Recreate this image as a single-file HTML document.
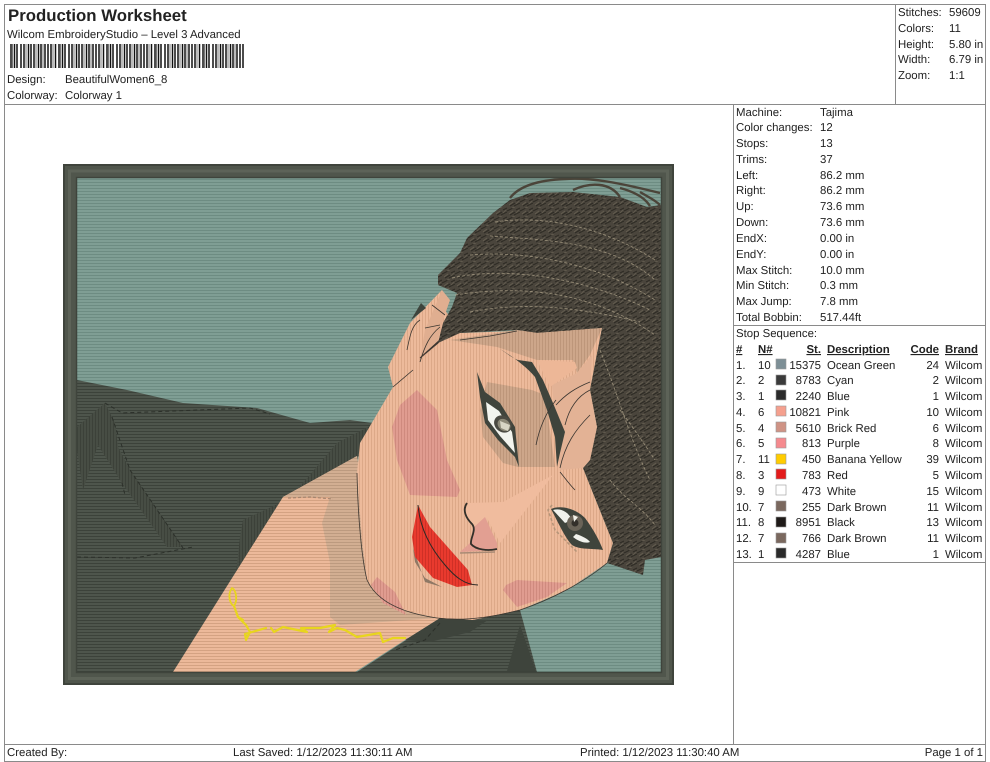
<!DOCTYPE html>
<html><head><meta charset="utf-8"><title>Production Worksheet</title>
<style>
html,body{margin:0;padding:0;background:#fff;width:990px;height:762px;overflow:hidden}
svg{display:block}
text{font-family:"Liberation Sans",Arial,sans-serif;font-size:11.4px;fill:#222;text-rendering:geometricPrecision}
.b{font-weight:bold}
.u{font-weight:bold;text-decoration:underline}
.r{text-anchor:end}
</style></head><body>
<svg width="990" height="762" viewBox="0 0 990 762" xmlns="http://www.w3.org/2000/svg">
<defs>
<pattern id="pTeal" width="6" height="3" patternUnits="userSpaceOnUse"><rect width="6" height="3" fill="#7f9e94"/><rect y="2" width="6" height="1" fill="#6d8c82"/></pattern>
<pattern id="pJack" width="6" height="3" patternUnits="userSpaceOnUse"><rect width="6" height="3" fill="#4e554c"/><rect y="2" width="6" height="1" fill="#3c423a"/></pattern>
<pattern id="pJack2" width="3" height="6" patternUnits="userSpaceOnUse"><rect width="3" height="6" fill="#474d44"/><rect x="2" width="1" height="6" fill="#3c4139"/></pattern>
<pattern id="pSkin" width="3" height="6" patternUnits="userSpaceOnUse"><rect width="3" height="6" fill="#edba9b"/><rect x="2" width="1" height="6" fill="#dca888"/></pattern>
<pattern id="pNeck" width="6" height="3" patternUnits="userSpaceOnUse"><rect width="6" height="3" fill="#ecb99a"/><rect y="2" width="6" height="1" fill="#d4a282"/></pattern>
<pattern id="pShade" width="6" height="3" patternUnits="userSpaceOnUse"><rect width="6" height="3" fill="#d2ae92"/><rect y="2" width="6" height="1" fill="#bc9a7f"/></pattern>
<pattern id="pBrow" width="3" height="6" patternUnits="userSpaceOnUse"><rect width="3" height="6" fill="#cda68a"/><rect x="2" width="1" height="6" fill="#bd967a"/></pattern>
<pattern id="pCheek" width="3" height="6" patternUnits="userSpaceOnUse"><rect width="3" height="6" fill="#e09c90"/><rect x="2" width="1" height="6" fill="#cf8a7e"/></pattern>
<pattern id="pRed" width="3" height="6" patternUnits="userSpaceOnUse"><rect width="3" height="6" fill="#e93a2e"/><rect x="2" width="1" height="6" fill="#cf3026"/></pattern>
<pattern id="pHair" width="13" height="9" patternUnits="userSpaceOnUse"><rect width="13" height="9" fill="#4a453c"/><path d="M0 4L6 1M7 8L13 5M3 8L8 5M9 3L13 1" stroke="#2e2b25" stroke-width="1.2"/><path d="M2 7L6 4M9 6L12 3M5 1L8 0" stroke="#645d50" stroke-width=".8"/></pattern>
<pattern id="pCode" width="48" height="24" patternUnits="userSpaceOnUse" x="10" y="44"><rect width="48" height="24" fill="#fff"/><path d="M1 0V24M4.500 0V24M7 0V24M11 0V24M14 0V24M18.500 0V24M21 0V24M24 0V24M28.500 0V24M31 0V24M35 0V24M38 0V24M41 0V24M45.500 0V24" stroke="#111" stroke-width="1.500"/><path d="M2.500 0V24M16 0V24M26 0V24M33 0V24M43 0V24" stroke="#777" stroke-width="1"/></pattern>
</defs>

<!-- page lines -->
<g stroke="#8a8a8a" stroke-width="1" fill="none" shape-rendering="crispEdges">
<path d="M4.500 4.500H985.500V761.500H4.500Z"/>
<path d="M4 104.500H986"/>
<path d="M895.500 4V104"/>
<path d="M733.500 104V744"/>
<path d="M733 325.500H986"/>
<path d="M733 562.500H986"/>
<path d="M4 744.500H986"/>
</g>

<!-- header -->
<text x="8" y="21" class="b" style="font-size:16.8px">Production Worksheet</text>
<text x="7" y="38">Wilcom EmbroideryStudio – Level 3 Advanced</text>
<rect x="10" y="44" width="234" height="24" fill="url(#pCode)"/>
<text x="7" y="83">Design:</text><text x="65" y="83">BeautifulWomen6_8</text>
<text x="7" y="99">Colorway:</text><text x="65" y="99">Colorway 1</text>

<text x="898" y="16">Stitches:</text><text x="949" y="16">59609</text>
<text x="898" y="32">Colors:</text><text x="949" y="32">11</text>
<text x="898" y="48">Height:</text><text x="949" y="48">5.80 in</text>
<text x="898" y="63">Width:</text><text x="949" y="63">6.79 in</text>
<text x="898" y="79">Zoom:</text><text x="949" y="79">1:1</text>

<!-- embroidery -->
<rect x="77" y="178" width="584" height="494" fill="url(#pTeal)"/>
<!-- jacket left -->
<path d="M77 380L127 390L183 403L257 408L310 423L350 420L372 423L357 460L283 497L230 587L173 672H77Z" fill="url(#pJack)"/>
<path d="M357 672L440 618L520 610L537 672Z" fill="url(#pJack)"/>
<path d="M520 625L507 671H536Z" fill="#3e443c"/>
<path d="M405 640L440 618L488 620L470 632L430 642Z" fill="#3e443c"/>
<path d="M77 427L105 403L115 423L118 447L130 470L183 547H167L122 483L98 445L83 490L77 450Z" fill="url(#pJack2)"/>
<path d="M337 443L297 490L357 457L372 425Z" fill="url(#pJack2)"/>
<path d="M243 520L280 503L235 582L240 537Z" fill="url(#pJack2)"/>
<g fill="none" stroke="#2c302a" stroke-width="1" stroke-dasharray="4 3">
<path d="M105 403L122 413L250 408L270 414M112 417L130 470L183 548M77 557L135 558L193 547"/>
<path d="M122 483L125 495M440 623L425 640L395 650"/>
</g>
<!-- neck -->
<path d="M173 672L283 497L357 456L375 590L440 618L405 640L355 672Z" fill="url(#pNeck)"/>
<path d="M283 497L330 497L322 523L330 563L330 617L340 625L438 618L400 610L375 590L357 456Z" fill="url(#pShade)"/>
<path d="M288 498L310 497L333 499" fill="none" stroke="#a58670" stroke-width="1.200" stroke-dasharray="3 2"/>
<!-- ear + face -->
<path d="M442 290L410 323L388 367L393 387L360 443L357 473L362 540L367 580L383 603L437 618L473 620L520 610L567 590L607 563L613 543L583 468L590 460L597 427L590 390L602 328L460 333L445 310Z" fill="url(#pSkin)"/>
<!-- ear details -->
<path d="M442 290L450 300L443 320L437 345L420 360L425 330Z" fill="#e0ae90"/>
<path d="M407 350C410 335 412 325 420 320M420 362C425 345 430 335 440 327M393 387L413 370M432 305L445 315M425 328L440 325" fill="none" stroke="#3c3630" stroke-width=".8"/>
<path d="M421 303L411 320L416 316L426 308Z" fill="#3e443c"/>
<path d="M438 343L420 358L442 338Z" fill="#3c3630" stroke="#3c3630" stroke-width="1"/>
<!-- hair strands top -->
<g fill="none" stroke="#4b4439" stroke-width="2.400">
<path d="M510 198C520 185 540 180 565 179C590 177 620 183 660 193"/>
<path d="M573 190C590 182 610 182 620 197M620 188C635 192 645 198 650 206M640 192C650 198 655 200 660 205"/>
</g>
<!-- hair -->
<path d="M510 200L493 213L467 238L460 253L438 275L438 285L457 293L452 307L443 323L438 343L460 333L517 330L537 333L602 328L590 390L597 427L590 460L583 468L613 543L607 563L643 575L645 560L661 557V205L647 207L620 197L573 192L530 193Z" fill="url(#pHair)"/>
<g fill="none" stroke="#a79c84" stroke-width=".9" stroke-dasharray="3 2" opacity=".8">
<path d="M495 222C540 215 600 225 655 260"/>
<path d="M490 236C540 240 610 240 655 280"/>
<path d="M470 255C530 250 600 265 655 300"/>
<path d="M452 278C510 265 590 280 650 310"/>
<path d="M455 295C520 285 590 290 655 335"/>
<path d="M470 312C530 300 590 310 640 322"/>
<path d="M600 350C620 400 630 440 650 480"/>
<path d="M610 480C625 500 640 505 655 525"/>
<path d="M620 410C635 430 645 445 655 460"/>
</g>
<!-- forehead shade -->
<path d="M450 340L517 330L537 333L602 328L590 355L577 373L573 360L537 360L497 347Z" fill="url(#pBrow)"/>
<path d="M577 373L592 355L590 390L597 427L590 460L583 468L560 470L552 385Z" fill="#e3b295"/>
<path d="M537 360L575 362L577 368L550 387Z" fill="#edb797"/>
<path d="M460 340L490 336L517 331" fill="none" stroke="#3c3630" stroke-width=".8"/>
<!-- eye shade -->
<path d="M487 382L532 390L545 395L555 467H518L503 463L483 437L480 410Z" fill="url(#pBrow)"/>
<!-- eye 1 -->
<path d="M477 372L485 392L500 403L515 427L519 467L515 457L498 440L485 423L480 397Z" fill="#3f443c"/>
<path d="M486 402L499 411L512 432L515 453L500 436L488 420Z" fill="#f2f4ee"/>
<ellipse cx="503" cy="424" rx="9.500" ry="8" transform="rotate(40 503 424)" fill="#4a4a42"/>
<ellipse cx="504" cy="425" rx="7" ry="5.500" transform="rotate(40 504 425)" fill="#8d8a78"/>
<path d="M500 421L510 425L508 431L501 428Z" fill="#d8d6c4"/>
<!-- brow -->
<path d="M497 347C505 352 512 358 518 360L532 362L543 380L553 403L565 432L560 453L557 467L555 437L547 410L535 377C525 365 510 355 497 347Z" fill="#3f443c"/>
<g fill="none" stroke="#3a3530" stroke-width=".8">
<path d="M556 405C565 395 575 388 590 382"/>
<path d="M536 445C540 425 548 410 556 400"/>
<path d="M565 425C570 405 580 395 590 390"/>
<path d="M560 468C565 445 575 430 590 415"/>
<path d="M560 472C565 478 570 485 575 490"/>
</g>
<!-- cheeks -->
<path d="M417 390L400 405L392 427L397 460L410 495L457 497L460 490L447 460L437 410Z" fill="url(#pCheek)"/>
<path d="M503 590L506 585L517 580L567 583L547 597L517 607Z" fill="url(#pCheek)"/>
<path d="M377 577L371 585L383 603L406 615L395 592Z" fill="url(#pCheek)"/>
<!-- nose -->
<path d="M553 475L503 502L468 503L465 512L473 528L487 518L500 543Z" fill="#f0bc9e"/>
<path d="M485 517L473 528L470 543L460 552L497 550L497 543Z" fill="#e29f92"/>
<path d="M467 503C462 510 466 518 472 524C477 530 470 538 471 544C476 550 488 551 497 549" fill="none" stroke="#33302a" stroke-width="1.800"/>
<path d="M460 553L495 552" stroke="#a98a75" stroke-width="1.500"/>
<!-- eye 2 -->
<path d="M551 509C560 505 575 508 585 518C594 530 600 542 603 550C590 548 580 550 572 545C565 538 558 522 551 509Z" fill="#3f443c"/>
<path d="M553 510C560 508 568 511 572 520L565 523ZM576 534C582 536 588 539 590 542C585 544 578 541 573 537Z" fill="#f0f2ec"/>
<circle cx="575" cy="523" r="8" fill="#6a6458"/>
<circle cx="575" cy="523" r="3.500" fill="#33302a"/>
<path d="M573 515L578 517L574 522Z" fill="#f2f2ea"/>
<path d="M552 505L548 510L555 530L578 553" fill="none" stroke="#b49478" stroke-width="1.500" stroke-dasharray="3 2"/>
<!-- lips -->
<path d="M413 548L415 562L425 578L442 587L425 582Z" fill="#8f7865"/>
<path d="M418 505L412 537L415 557L433 578L457 587L472 585L468 570L453 553L430 527Z" fill="url(#pRed)"/>
<path d="M418 505C420 530 432 550 445 565C455 577 465 585 478 585" fill="none" stroke="#2c2a26" stroke-width="1"/>
<!-- face outline -->
<path d="M357 473C358 520 362 560 367 580C375 598 395 612 437 618C470 622 500 615 520 610C550 600 585 582 607 563" fill="none" stroke="#3c3630" stroke-width=".8"/>
<!-- necklace -->
<g fill="none" stroke="#e8d51e" stroke-linecap="round" stroke-linejoin="round">
<path d="M232 588C227 595 230 604 234 606C238 600 236 590 232 588Z" stroke-width="1.800"/>
<path d="M234 606L238 617L246 625L250 632L246 640L245 634L252 632L266 628M238 617L243 620" stroke-width="2.200"/>
<path d="M271 628L274 632L283 627L307 632L301 628L320 628L335 625L329 632L337 628L345 630L357 637L380 633L383 642L393 638L405 638" stroke-width="2.200"/>
</g>
<!-- frame -->
<path d="M63 164H674V685H63ZM77 178V672H661V178Z" fill="#50564c" fill-rule="evenodd"/>
<path d="M69.500 171H667.500V678.500H69.500Z" fill="none" stroke="#5d6358" stroke-width="3"/>
<path d="M64 165H673V684H64Z" fill="none" stroke="#3f443c" stroke-width="2"/>
<path d="M76.500 177.500H661.500V672.500H76.500Z" fill="none" stroke="#3f443c" stroke-width="1.500"/>

<!-- right info -->
<text x="736" y="116">Machine:</text><text x="820" y="116">Tajima</text>
<text x="736" y="131">Color changes:</text><text x="820" y="131">12</text>
<text x="736" y="147">Stops:</text><text x="820" y="147">13</text>
<text x="736" y="163">Trims:</text><text x="820" y="163">37</text>
<text x="736" y="179">Left:</text><text x="820" y="179">86.2 mm</text>
<text x="736" y="194">Right:</text><text x="820" y="194">86.2 mm</text>
<text x="736" y="210">Up:</text><text x="820" y="210">73.6 mm</text>
<text x="736" y="226">Down:</text><text x="820" y="226">73.6 mm</text>
<text x="736" y="242">EndX:</text><text x="820" y="242">0.00 in</text>
<text x="736" y="258">EndY:</text><text x="820" y="258">0.00 in</text>
<text x="736" y="274">Max Stitch:</text><text x="820" y="274">10.0 mm</text>
<text x="736" y="289">Min Stitch:</text><text x="820" y="289">0.3 mm</text>
<text x="736" y="305">Max Jump:</text><text x="820" y="305">7.8 mm</text>
<text x="736" y="321">Total Bobbin:</text><text x="820" y="321">517.44ft</text>
<text x="736" y="337">Stop Sequence:</text>

<text x="736" y="353" class="u">#</text><text x="758" y="353" class="u">N#</text><text x="821" y="353" class="u r">St.</text><text x="827" y="353" class="u">Description</text><text x="939" y="353" class="u r">Code</text><text x="945" y="353" class="u">Brand</text>

<g stroke="#999" stroke-width=".6">
<rect x="776" y="359" width="10" height="10" fill="#7d8f96"/>
<rect x="776" y="375" width="10" height="10" fill="#3a3a3a"/>
<rect x="776" y="390" width="10" height="10" fill="#2a2a2a"/>
<rect x="776" y="406" width="10" height="10" fill="#f5a08e"/>
<rect x="776" y="422" width="10" height="10" fill="#cf9385"/>
<rect x="776" y="438" width="10" height="10" fill="#f58a8e"/>
<rect x="776" y="454" width="10" height="10" fill="#ffcc00"/>
<rect x="776" y="469" width="10" height="10" fill="#e31b1b"/>
<rect x="776" y="485" width="10" height="10" fill="#ffffff"/>
<rect x="776" y="501" width="10" height="10" fill="#7a685e"/>
<rect x="776" y="517" width="10" height="10" fill="#1e1a18"/>
<rect x="776" y="533" width="10" height="10" fill="#7a685e"/>
<rect x="776" y="548" width="10" height="10" fill="#2a2a2a"/>
</g>

<text x="736" y="369">1.</text><text x="758" y="369">10</text><text x="821" y="369" class="r">15375</text><text x="827" y="369">Ocean Green</text><text x="939" y="369" class="r">24</text><text x="945" y="369">Wilcom</text>
<text x="736" y="384">2.</text><text x="758" y="384">2</text><text x="821" y="384" class="r">8783</text><text x="827" y="384">Cyan</text><text x="939" y="384" class="r">2</text><text x="945" y="384">Wilcom</text>
<text x="736" y="400">3.</text><text x="758" y="400">1</text><text x="821" y="400" class="r">2240</text><text x="827" y="400">Blue</text><text x="939" y="400" class="r">1</text><text x="945" y="400">Wilcom</text>
<text x="736" y="416">4.</text><text x="758" y="416">6</text><text x="821" y="416" class="r">10821</text><text x="827" y="416">Pink</text><text x="939" y="416" class="r">10</text><text x="945" y="416">Wilcom</text>
<text x="736" y="432">5.</text><text x="758" y="432">4</text><text x="821" y="432" class="r">5610</text><text x="827" y="432">Brick Red</text><text x="939" y="432" class="r">6</text><text x="945" y="432">Wilcom</text>
<text x="736" y="447">6.</text><text x="758" y="447">5</text><text x="821" y="447" class="r">813</text><text x="827" y="447">Purple</text><text x="939" y="447" class="r">8</text><text x="945" y="447">Wilcom</text>
<text x="736" y="463">7.</text><text x="758" y="463">11</text><text x="821" y="463" class="r">450</text><text x="827" y="463">Banana Yellow</text><text x="939" y="463" class="r">39</text><text x="945" y="463">Wilcom</text>
<text x="736" y="479">8.</text><text x="758" y="479">3</text><text x="821" y="479" class="r">783</text><text x="827" y="479">Red</text><text x="939" y="479" class="r">5</text><text x="945" y="479">Wilcom</text>
<text x="736" y="495">9.</text><text x="758" y="495">9</text><text x="821" y="495" class="r">473</text><text x="827" y="495">White</text><text x="939" y="495" class="r">15</text><text x="945" y="495">Wilcom</text>
<text x="736" y="511">10.</text><text x="758" y="511">7</text><text x="821" y="511" class="r">255</text><text x="827" y="511">Dark Brown</text><text x="939" y="511" class="r">11</text><text x="945" y="511">Wilcom</text>
<text x="736" y="526">11.</text><text x="758" y="526">8</text><text x="821" y="526" class="r">8951</text><text x="827" y="526">Black</text><text x="939" y="526" class="r">13</text><text x="945" y="526">Wilcom</text>
<text x="736" y="542">12.</text><text x="758" y="542">7</text><text x="821" y="542" class="r">766</text><text x="827" y="542">Dark Brown</text><text x="939" y="542" class="r">11</text><text x="945" y="542">Wilcom</text>
<text x="736" y="558">13.</text><text x="758" y="558">1</text><text x="821" y="558" class="r">4287</text><text x="827" y="558">Blue</text><text x="939" y="558" class="r">1</text><text x="945" y="558">Wilcom</text>

<!-- footer -->
<text x="7" y="756">Created By:</text>
<text x="233" y="756">Last Saved: 1/12/2023 11:30:11 AM</text>
<text x="580" y="756">Printed: 1/12/2023 11:30:40 AM</text>
<text x="983" y="756" class="r">Page 1 of 1</text>
</svg>
</body></html>
